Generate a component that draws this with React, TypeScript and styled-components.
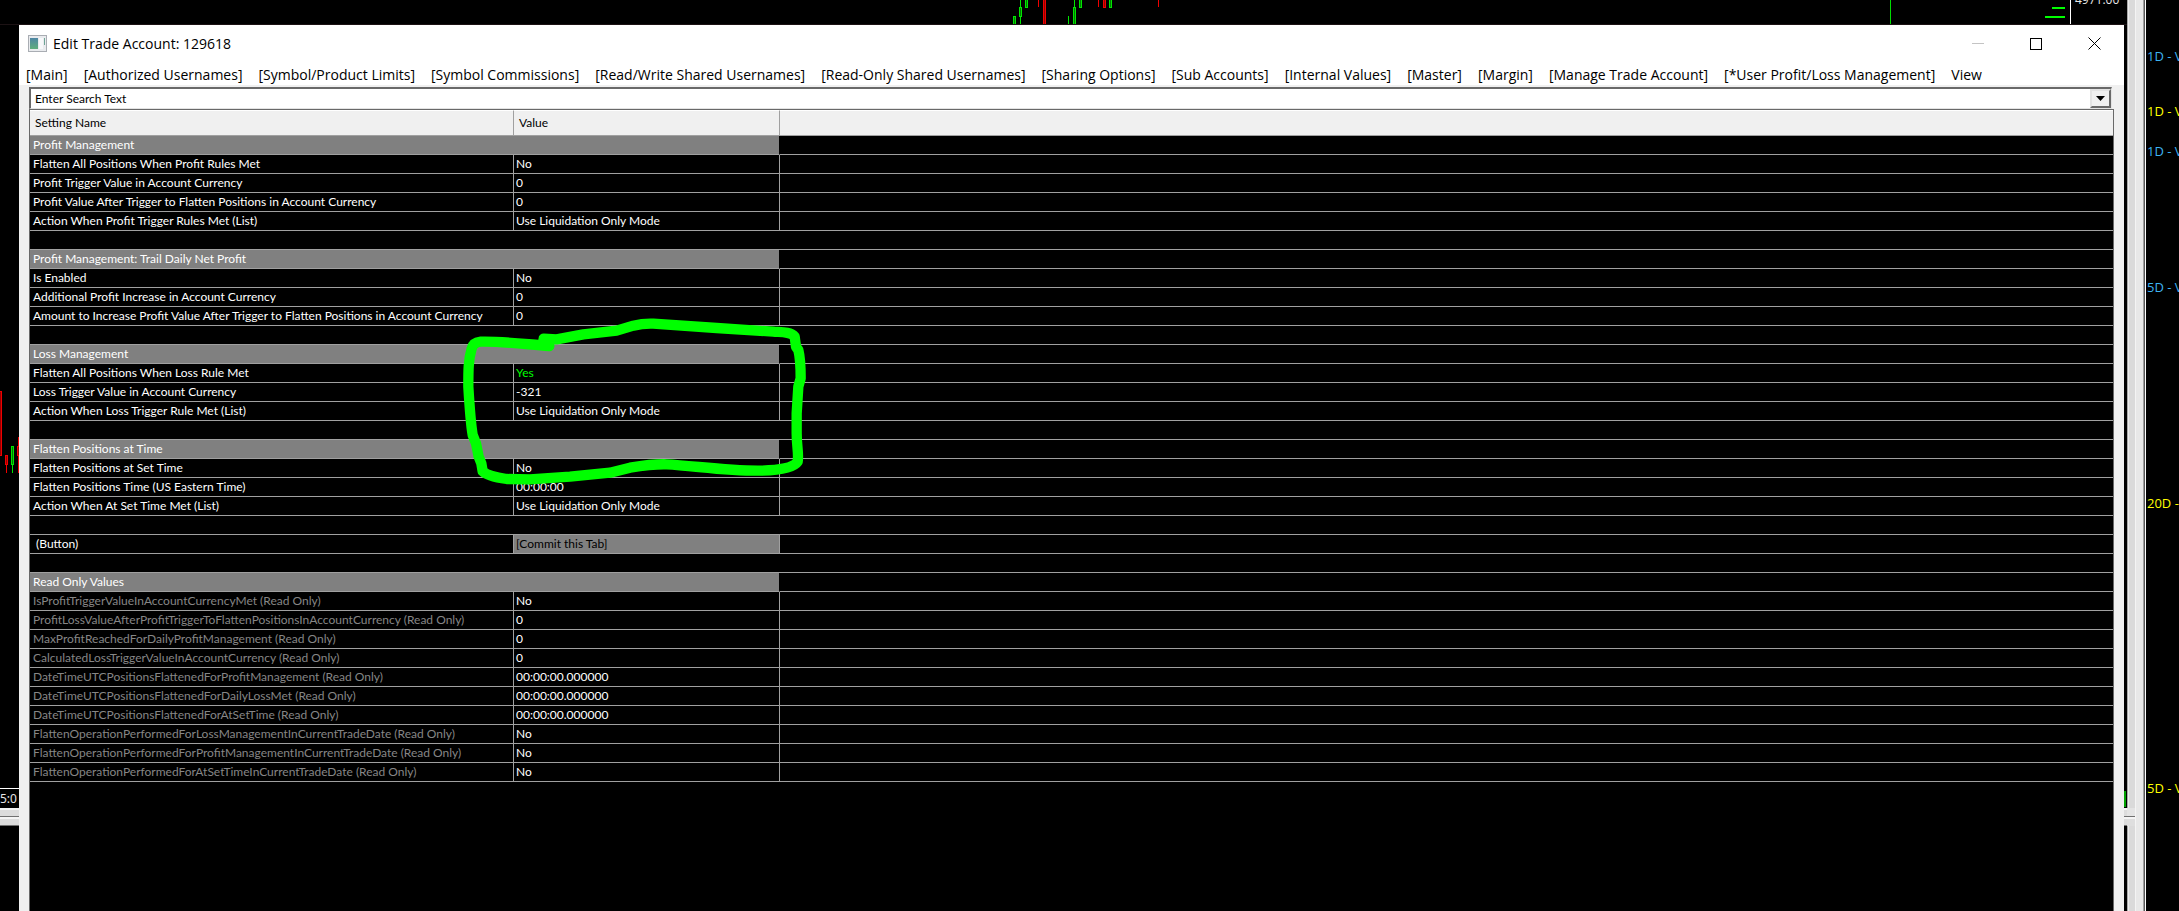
import React from 'react';
import styled, { createGlobalStyle } from 'styled-components';

const Global = createGlobalStyle`
  *, *::before, *::after { box-sizing: border-box; }
  body { margin: 0; background: #000; overflow: hidden; font-family: "Open Sans", "Noto Sans", sans-serif; }
`;

const Desktop = styled.div`
  display: flex;
  height: 100vh;
  background: #000;
`;

const ChartArea = styled.div`
  flex: 1;
  min-width: 0;
  display: flex;
  flex-direction: column;
`;

const ChartStrip = styled.div`
  display: flex;
  justify-content: space-between;
  height: 25px;
  flex: none;
  overflow: hidden;
  border-bottom: 1px solid #1c1214;
`;

const PriceScale = styled.div`
  display: flex;
  flex: none;
`;

const Price = styled.span`
  width: 57px;
  padding-left: 4px;
  border-left: 1px solid #fff;
  color: #e6e6e6;
  font-size: 12px;
  line-height: 16px;
`;

const PriceText = styled.span`
  display: block;
  margin-top: -8px;
`;

const Middle = styled.div`
  flex: 1;
  min-height: 0;
  display: flex;
`;

const Edge = styled.div<{ $w: number }>`
  width: ${p => p.$w}px;
  flex: none;
  display: flex;
  flex-direction: column;
  overflow: hidden;
`;

const EdgeChart = styled.div<{ $h: number }>`
  height: ${p => p.$h}px;
  flex: none;
`;

const TimeScale = styled.div`
  height: 20px;
  flex: none;
  border-top: 1px solid #fff;
  color: #e6e6e6;
  font: 12px/20px "Noto Sans", sans-serif;
  white-space: nowrap;
`;

const HSplit = styled.div`
  height: 18px;
  flex: none;
  background: linear-gradient(#f4f4f4 0 2px, #dcdcdc 2px 8px, #707070 8px 9px, #f4f4f4 9px 11px, #dcdcdc 11px 17px, #707070 17px);
`;

const Dialog = styled.section`
  flex: 1;
  min-width: 0;
  display: flex;
  flex-direction: column;
  background: #f0f0f0;
`;

const TitleBar = styled.header`
  display: flex;
  align-items: center;
  height: 37px;
  padding: 0 1px 0 9px;
  background: #fff;
`;

const Title = styled.h1`
  flex: 1;
  margin: 0 0 0 6px;
  font-size: 14px;
  font-weight: 400;
  line-height: 20px;
`;

const Caption = styled.button`
  width: 58px;
  height: 36px;
  display: grid;
  place-items: center;
  padding: 0;
  border: 0;
  background: transparent;
`;

const MenuBar = styled.nav`
  display: flex;
  gap: 16px;
  height: 23px;
  padding-left: 7px;
  background: #fff;
`;

const MenuItem = styled.button`
  padding: 0;
  border: 0;
  background: transparent;
  color: #000;
  font: 14px/26px "Open Sans", "Noto Sans", sans-serif;
  white-space: nowrap;
`;

const Body = styled.div`
  flex: 1;
  min-height: 0;
  display: flex;
  flex-direction: column;
  padding: 2px 10px 0;
`;

const SearchBox = styled.div`
  display: flex;
  height: 22px;
  margin-right: 2px;
  border: solid;
  border-width: 2px 1px 1px 2px;
  border-color: #696969 #e3e3e3 #e3e3e3 #696969;
  background: #fff;
`;

const SearchInput = styled.input`
  flex: 1;
  min-width: 0;
  padding: 0 4px;
  border: 0;
  outline: 0;
  background: transparent;
  color: #000;
  font: 12px/18px Lato, "Open Sans", sans-serif;
  &::placeholder { color: #000; opacity: 1; }
`;

const DropButton = styled.button`
  width: 21px;
  padding: 0;
  display: grid;
  place-items: center;
  background: #f0f0f0;
  border: 2px solid;
  border-color: #e3e3e3 #696969 #696969 #e3e3e3;
`;

const GridFrame = styled.div`
  position: relative;
  flex: 1;
  min-height: 0;
  border: 1px solid #696969;
  border-bottom: 0;
  background: #000;
  overflow: hidden;
`;

const Grid = styled.table`
  width: 100%;
  table-layout: fixed;
  border-collapse: separate;
  border-spacing: 0;
  font-family: Lato, "Open Sans", sans-serif;
  font-size: 12px;
  line-height: 18px;
  color: #fff;
`;

const Head = styled.th`
  height: 26px;
  padding: 0 4px 0 5px;
  text-align: left;
  font-weight: 400;
  color: #000;
  background: #f0f0f0;
  border-top: 1px solid #fff;
  border-bottom: 1px solid #a0a0a0;
  &:not(:last-child) { border-right: 1px solid #a0a0a0; }
`;

type Kind = 'group' | 'name' | 'value' | 'rest';

const RIGHT_RULE: Record<Kind, string> = {
  group: '1px solid #000',
  name: '1px solid #a0a0a0',
  value: '1px solid #a0a0a0',
  rest: '0',
};

const Cell = styled.td<{ $kind: Kind; $color?: string; $fill?: boolean }>`
  height: 19px;
  padding: 0 ${p => (p.$kind === 'value' ? 2 : 3)}px;
  white-space: nowrap;
  overflow: hidden;
  border-bottom: 1px solid #a0a0a0;
  color: ${p => p.$color || '#fff'};
  background: ${p => (p.$fill ? '#808080' : 'transparent')};
  border-right: ${p => RIGHT_RULE[p.$kind]};
`;

const CellButton = styled.button`
  display: block;
  padding: 0;
  border: 0;
  background: transparent;
  color: #000;
  font: inherit;
`;

const Marker = styled.svg`
  position: absolute;
  left: 410px;
  top: 190px;
  pointer-events: none;
`;

const Splitter = styled.div`
  position: relative;
  width: 19px;
  flex: none;
  background: linear-gradient(90deg, #a8a8a8 0 1px, #ececec 1px 2px, #dadada 2px 8px, #f4f4f4 8px 9px, #e8e8e8 9px 16px, #a0a0a0 16px 17px, #5a5a5a 17px 18px, #fff 18px);
`;

const Joint = styled.div`
  position: absolute;
  left: 0;
  top: 808px;
  width: 8px;
  height: 18px;
  background: linear-gradient(#e4e4e4 0 8px, #707070 8px 9px, #f4f4f4 9px 11px, #dedede 11px);
`;

const Levels = styled.aside`
  position: relative;
  width: 33px;
  flex: none;
  overflow: hidden;
`;

const Level = styled.span<{ $y: number; $color: string }>`
  position: absolute;
  left: 1px;
  top: ${p => p.$y}px;
  color: ${p => p.$color};
  font-size: 13px;
  line-height: 18px;
  white-space: pre;
`;

type Row = { group?: string; name?: string; value?: string; ro?: boolean; green?: boolean; button?: boolean };

const ROWS: Row[] = [
  { group: 'Profit Management' },
  { name: 'Flatten All Positions When Profit Rules Met', value: 'No' },
  { name: 'Profit Trigger Value in Account Currency', value: '0' },
  { name: 'Profit Value After Trigger to Flatten Positions in Account Currency', value: '0' },
  { name: 'Action When Profit Trigger Rules Met (List)', value: 'Use Liquidation Only Mode' },
  {},
  { group: 'Profit Management: Trail Daily Net Profit' },
  { name: 'Is Enabled', value: 'No' },
  { name: 'Additional Profit Increase in Account Currency', value: '0' },
  { name: 'Amount to Increase Profit Value After Trigger to Flatten Positions in Account Currency', value: '0' },
  {},
  { group: 'Loss Management' },
  { name: 'Flatten All Positions When Loss Rule Met', value: 'Yes', green: true },
  { name: 'Loss Trigger Value in Account Currency', value: '-321' },
  { name: 'Action When Loss Trigger Rule Met (List)', value: 'Use Liquidation Only Mode' },
  {},
  { group: 'Flatten Positions at Time' },
  { name: 'Flatten Positions at Set Time', value: 'No' },
  { name: 'Flatten Positions Time (US Eastern Time)', value: '00:00:00' },
  { name: 'Action When At Set Time Met (List)', value: 'Use Liquidation Only Mode' },
  {},
  { name: '\u00a0(Button)', value: '[Commit this Tab]', button: true },
  {},
  { group: 'Read Only Values' },
  { name: 'IsProfitTriggerValueInAccountCurrencyMet (Read Only)', value: 'No', ro: true },
  { name: 'ProfitLossValueAfterProfitTriggerToFlattenPositionsInAccountCurrency (Read Only)', value: '0', ro: true },
  { name: 'MaxProfitReachedForDailyProfitManagement (Read Only)', value: '0', ro: true },
  { name: 'CalculatedLossTriggerValueInAccountCurrency (Read Only)', value: '0', ro: true },
  { name: 'DateTimeUTCPositionsFlattenedForProfitManagement (Read Only)', value: '00:00:00.000000', ro: true },
  { name: 'DateTimeUTCPositionsFlattenedForDailyLossMet (Read Only)', value: '00:00:00.000000', ro: true },
  { name: 'DateTimeUTCPositionsFlattenedForAtSetTime (Read Only)', value: '00:00:00.000000', ro: true },
  { name: 'FlattenOperationPerformedForLossManagementInCurrentTradeDate (Read Only)', value: 'No', ro: true },
  { name: 'FlattenOperationPerformedForProfitManagementInCurrentTradeDate (Read Only)', value: 'No', ro: true },
  { name: 'FlattenOperationPerformedForAtSetTimeInCurrentTradeDate (Read Only)', value: 'No', ro: true },
];

const MENU = [
  '[Main]', '[Authorized Usernames]', '[Symbol/Product Limits]', '[Symbol Commissions]',
  '[Read/Write Shared Usernames]', '[Read-Only Shared Usernames]', '[Sharing Options]',
  '[Sub Accounts]', '[Internal Values]', '[Master]', '[Margin]', '[Manage Trade Account]',
  '[*User Profit/Loss Management]', 'View',
];

const LEVELS: [number, string, string][] = [
  [47, '#3db4f2', '1D - V'],
  [102, '#ffff00', '1D - V'],
  [142, '#3db4f2', '1D - V'],
  [278, '#3db4f2', '5D - V'],
  [494, '#ffff00', '20D -'],
  [779, '#ffff00', '5D - V'],
];

type Bar = { x: number; top: number; bottom: number; up: boolean; thin?: boolean; wick?: [number, number] };

const TOP_BARS: Bar[] = [
  { x: 1013, top: 16, bottom: 26, up: true },
  { x: 1019, top: 7, bottom: 17, up: true, wick: [0, 24] },
  { x: 1025, top: -4, bottom: 8, up: true },
  { x: 1038, top: 0, bottom: 7, up: false, thin: true },
  { x: 1043, top: -4, bottom: 28, up: false },
  { x: 1068, top: 16, bottom: 24, up: true, thin: true },
  { x: 1073, top: 7, bottom: 28, up: true, wick: [0, 7] },
  { x: 1079, top: -4, bottom: 8, up: true },
  { x: 1098, top: 0, bottom: 7, up: false, thin: true },
  { x: 1103, top: -4, bottom: 8, up: false },
  { x: 1109, top: -4, bottom: 8, up: true },
  { x: 1158, top: 0, bottom: 7, up: false, thin: true },
];

const LEFT_BARS: Bar[] = [
  { x: -1, top: 366, bottom: 431, up: false },
  { x: 5, top: 430, bottom: 440, up: false, wick: [430, 448] },
  { x: 11, top: 421, bottom: 440, up: true, wick: [421, 448] },
  { x: 17, top: 421, bottom: 431, up: false, wick: [412, 448] },
];

function Candles({ bars }: { bars: Bar[] }) {
  return (
    <>
      {bars.map(b => {
        const line = b.up ? '#00e600' : '#f00000';
        const fill = b.up ? '#007800' : '#960000';
        if (b.thin) return <rect key={b.x} x={b.x} y={b.top} width="1" height={b.bottom - b.top} fill={line} />;
        return (
          <g key={b.x}>
            {b.wick && <rect x={b.x + 1} y={b.wick[0]} width="1" height={b.wick[1] - b.wick[0]} fill={line} />}
            <rect x={b.x} y={b.top} width="3" height={b.bottom - b.top} fill={line} />
            <rect x={b.x + 1} y={b.top + 1} width="1" height={b.bottom - b.top - 2} fill={fill} />
          </g>
        );
      })}
    </>
  );
}

function SettingRow({ row }: { row: Row }) {
  if (row.group) {
    return (
      <tr>
        <Cell colSpan={2} $kind="group" $fill>{row.group}</Cell>
        <Cell $kind="rest" />
      </tr>
    );
  }
  if (!row.name) {
    return <tr><Cell colSpan={3} $kind="rest" /></tr>;
  }
  return (
    <tr>
      <Cell $kind="name" $color={row.ro ? '#868686' : undefined}>{row.name}</Cell>
      <Cell $kind="value" $fill={row.button} $color={row.green ? '#00ff00' : undefined}>
        {row.button ? <CellButton type="button">{row.value}</CellButton> : row.value}
      </Cell>
      <Cell $kind="rest" />
    </tr>
  );
}

export default function App() {
  return (
    <Desktop>
      <Global />
      <ChartArea>
        <ChartStrip>
          <svg width="1200" height="24" shapeRendering="crispEdges" aria-hidden="true">
            <Candles bars={TOP_BARS} />
          </svg>
          <PriceScale>
            <svg width="180" height="24" shapeRendering="crispEdges" aria-hidden="true">
              <rect x="0" y="0" width="1" height="24" fill="#00dc00" />
              <rect x="162" y="7" width="13" height="2" fill="#00ff00" />
              <rect x="155" y="16" width="20" height="2" fill="#00ff00" />
            </svg>
            <Price><PriceText>4971.00</PriceText></Price>
          </PriceScale>
        </ChartStrip>
        <Middle>
          <Edge $w={19}>
            <EdgeChart $h={763}>
              <svg width="19" height="763" shapeRendering="crispEdges" aria-hidden="true">
                <Candles bars={LEFT_BARS} />
              </svg>
            </EdgeChart>
            <TimeScale>5:0</TimeScale>
            <HSplit />
          </Edge>
          <Dialog>
            <TitleBar>
              <svg width="19" height="17" viewBox="0 0 19 17" aria-hidden="true">
                <defs>
                  <linearGradient id="pane" x1="0" y1="0" x2="0" y2="1">
                    <stop offset="0" stopColor="#4f86a4" />
                    <stop offset="1" stopColor="#5fae7c" />
                  </linearGradient>
                </defs>
                <rect x="0.5" y="0.5" width="18" height="16" fill="#e9ebee" stroke="#a9adb3" />
                <rect x="2" y="3" width="8" height="11" fill="url(#pane)" />
                <rect x="11" y="3" width="4" height="11" fill="#f7f8fa" />
                <rect x="16" y="3" width="1" height="7" fill="#6fa596" />
              </svg>
              <Title>Edit Trade Account: 129618</Title>
              <Caption type="button" aria-label="Minimize">
                <svg width="12" height="12"><path d="M0 5.5H12" stroke="#c4c4c4" /></svg>
              </Caption>
              <Caption type="button" aria-label="Maximize">
                <svg width="12" height="12"><rect x="0.5" y="0.5" width="11" height="11" fill="none" stroke="#000" /></svg>
              </Caption>
              <Caption type="button" aria-label="Close">
                <svg width="13" height="13"><path d="M0.5 0.5L12.5 12.5M12.5 0.5L0.5 12.5" stroke="#000" /></svg>
              </Caption>
            </TitleBar>
            <MenuBar>
              {MENU.map(m => <MenuItem key={m} type="button">{m}</MenuItem>)}
            </MenuBar>
            <Body>
              <SearchBox>
                <SearchInput type="text" aria-label="Search" placeholder="Enter Search Text" />
                <DropButton type="button" aria-label="Show searches">
                  <svg width="9" height="5"><path d="M0 0H9L4.5 5Z" fill="#000" /></svg>
                </DropButton>
              </SearchBox>
              <GridFrame>
                <Grid>
                  <colgroup>
                    <col style={{ width: 484 }} />
                    <col style={{ width: 266 }} />
                    <col />
                  </colgroup>
                  <thead>
                    <tr><Head>Setting Name</Head><Head>Value</Head><Head aria-label="Empty" /></tr>
                  </thead>
                  <tbody>
                    {ROWS.map((r, i) => <SettingRow key={i} row={r} />)}
                  </tbody>
                </Grid>
                <Marker width="380" height="200" viewBox="0 0 1140 600" aria-hidden="true">
                  <path
                    d="M328 138C250 132 180 123 122 125C104 127 97 136 95 146C85 180 85 210 85 260C88 310 92 370 98 405L108 430L116 470L124 490L128 514C140 527 170 533 200 537L270 538L390 530L510 518L570 503C620 495 650 492 680 493C760 497 860 513 960 512C1010 511 1060 505 1073 485C1077 460 1070 440 1070 400L1070 340L1075 260L1082 235C1082 200 1080 170 1075 150L1068 140L1064 110C1050 94 1020 97 1000 95L830 84L640 71C610 70 600 72 580 77L530 92L430 103L350 118L311 116L311 134"
                    fill="none" stroke="#00ff00" strokeWidth="31" strokeLinecap="round" strokeLinejoin="round"
                  />
                </Marker>
              </GridFrame>
            </Body>
          </Dialog>
          <Edge $w={3}>
            <EdgeChart $h={783}>
              <svg width="3" height="783" shapeRendering="crispEdges" aria-hidden="true">
                <rect x="0" y="766" width="2" height="16" fill="#00a000" />
              </svg>
            </EdgeChart>
            <HSplit />
          </Edge>
        </Middle>
      </ChartArea>
      <Splitter><Joint /></Splitter>
      <Levels>
        {LEVELS.map(([y, color, text]) => <Level key={y} $y={y} $color={color}>{text}</Level>)}
      </Levels>
    </Desktop>
  );
}
